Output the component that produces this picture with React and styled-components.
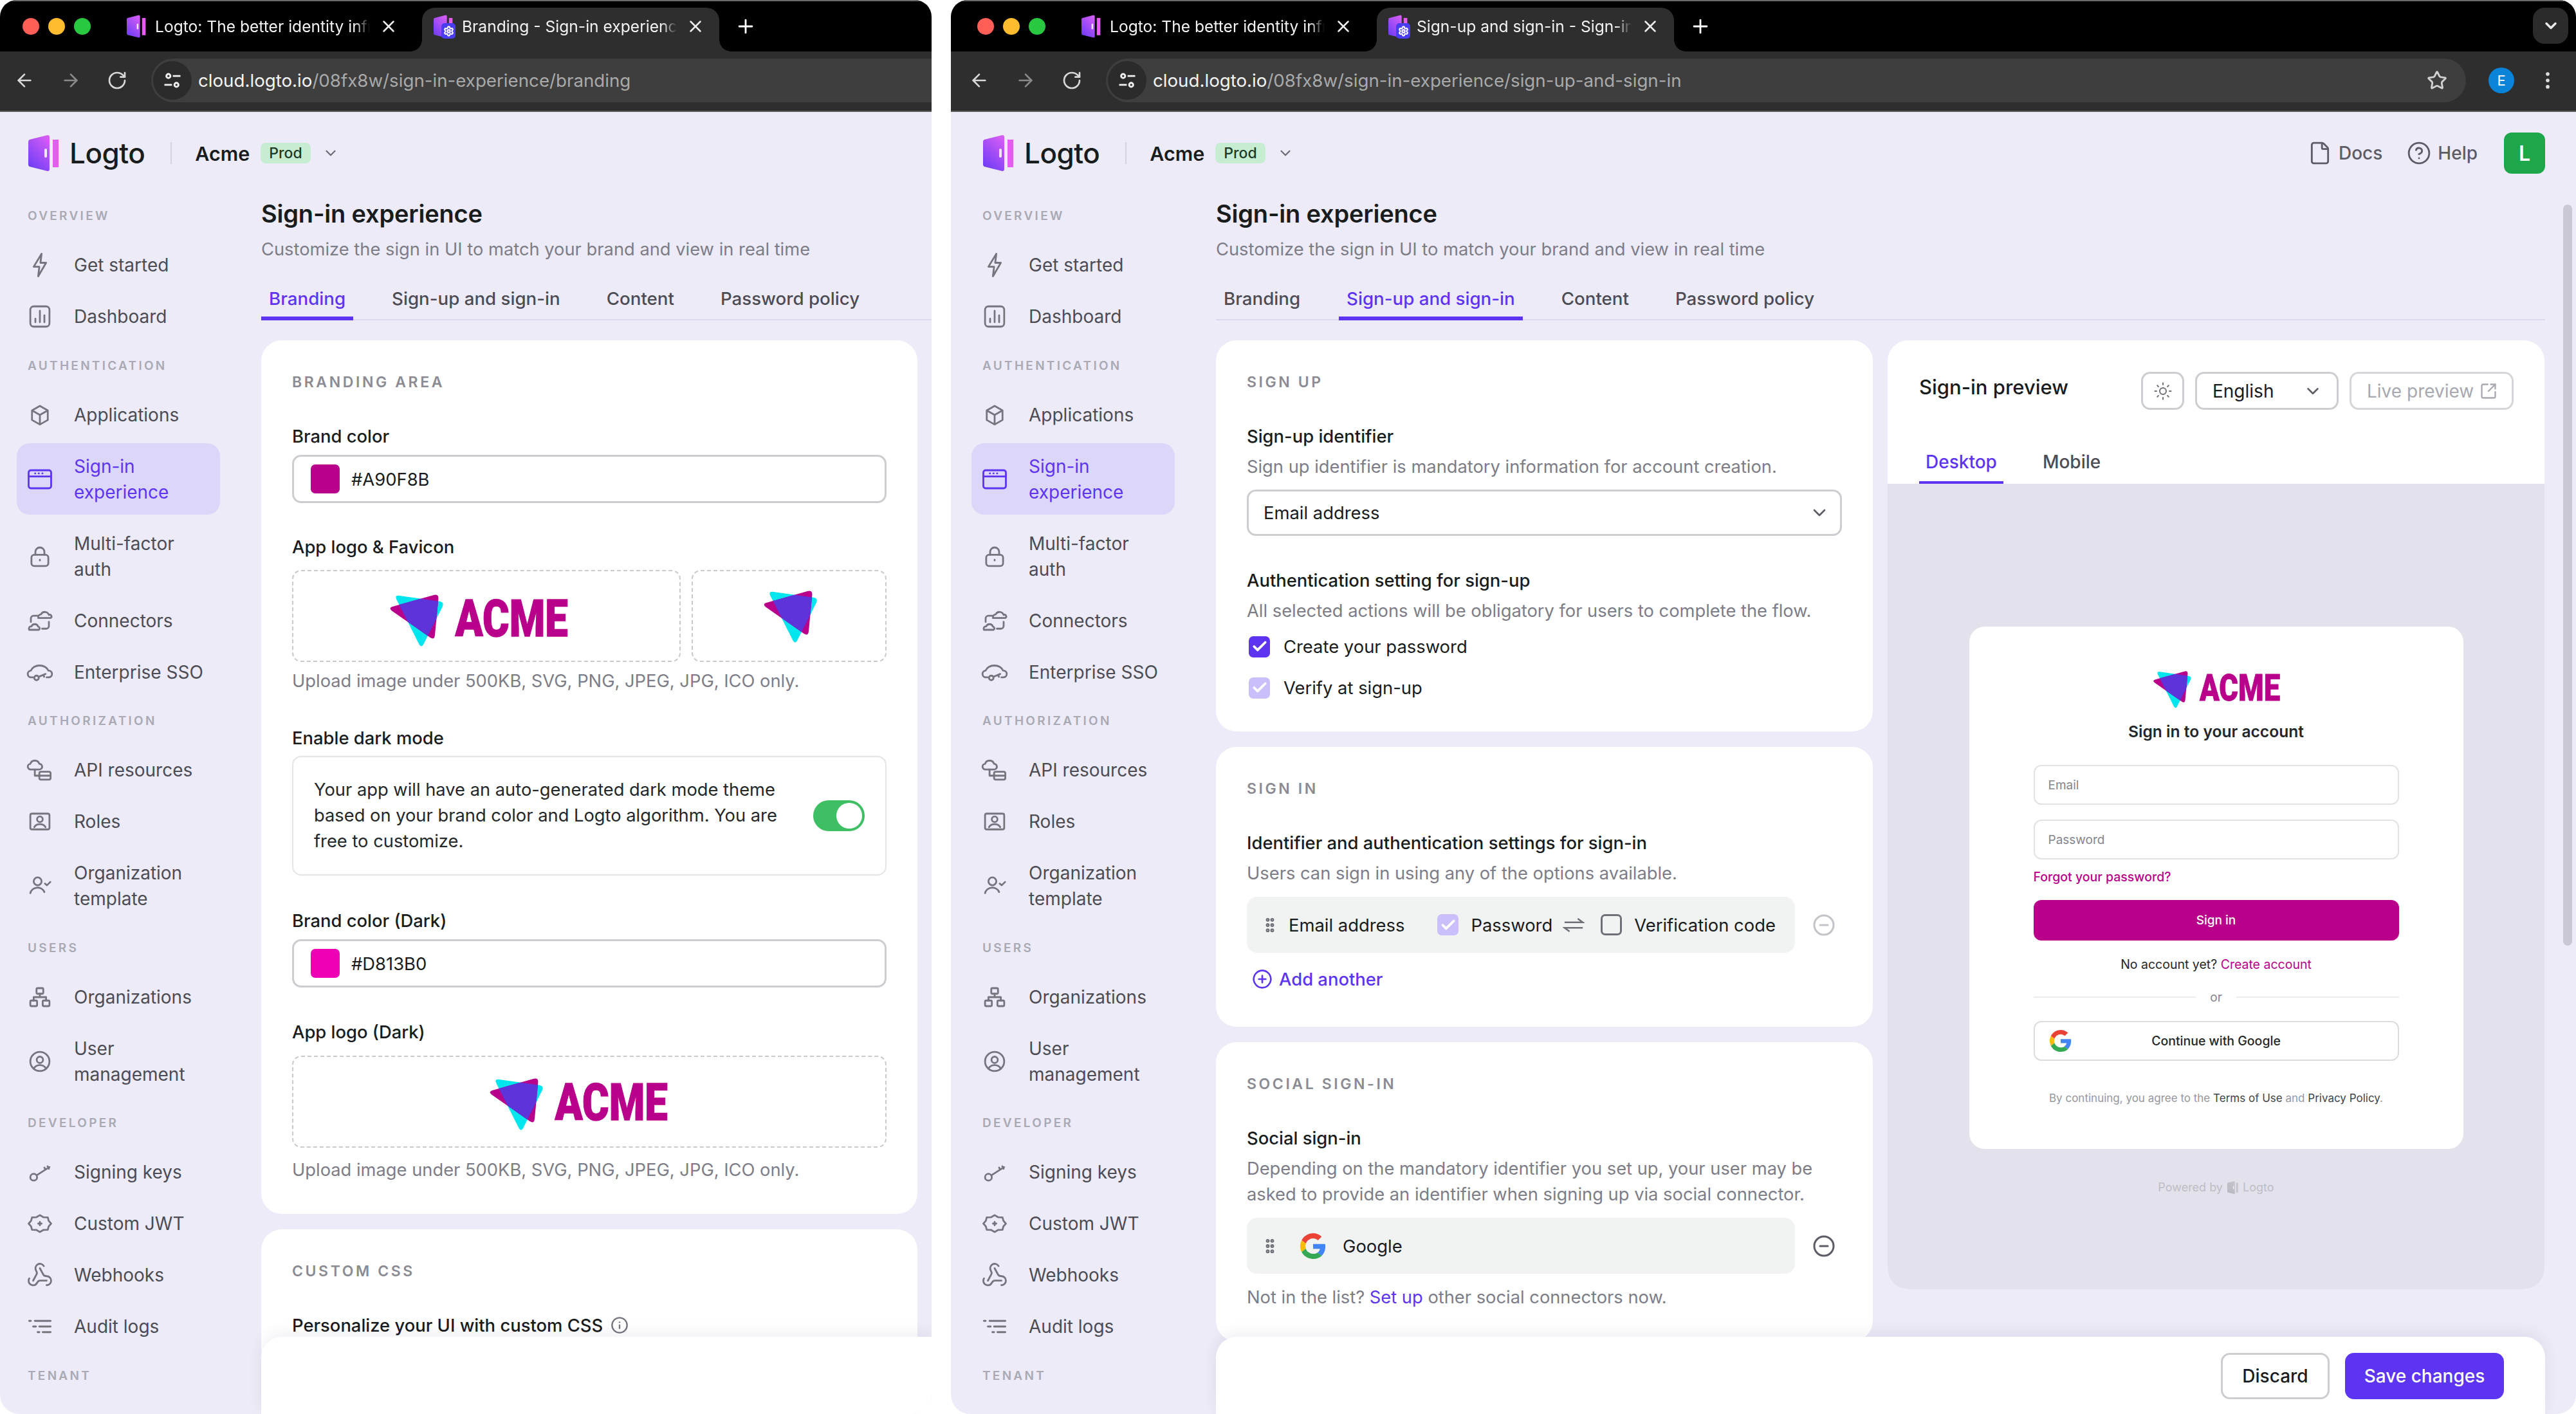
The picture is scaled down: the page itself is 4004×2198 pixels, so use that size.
import React from "react";
import styled, { createGlobalStyle } from "styled-components";
import {
  ArrowLeft,
  ArrowRight,
  Check,
  ChevronDown,
  CircleHelp,
  CircleMinus,
  CirclePlus,
  EllipsisVertical,
  File,
  GripVertical,
  Info,
  Plus,
  RotateCw,
  Settings,
  SquareArrowOutUpRight,
  Star,
  Sun,
  X,
} from "lucide-react";

const GlobalStyle = createGlobalStyle`
  html, body { margin: 0; padding: 0; background: #fff; }
  body { font-family: Inter, "Noto Sans", sans-serif; color: #191c1d; }
  * { box-sizing: border-box; }
`;

const PURPLE = "#5d34f2";
const BRAND = "#b8008b";

/* ---------- logos ---------- */

const roundedPath = (pts, r) => {
  const out = [];
  pts.forEach((p, i) => {
    const prev = pts[(i + pts.length - 1) % pts.length];
    const next = pts[(i + 1) % pts.length];
    const toward = (a, b) => {
      const len = Math.hypot(b[0] - a[0], b[1] - a[1]);
      return [a[0] + ((b[0] - a[0]) * r) / len, a[1] + ((b[1] - a[1]) * r) / len];
    };
    const s = toward(p, prev);
    const e = toward(p, next);
    out.push(`${i ? "L" : "M"}${s[0]} ${s[1]}Q${p[0]} ${p[1]} ${e[0]} ${e[1]}`);
  });
  return out.join("") + "Z";
};

const cyanTri = roundedPath([[5.5, 0.5], [61.5, 8.5], [35.5, 60]], 6);
const pinkTri = roundedPath([[-1.5, 15], [55, -1], [50, 51]], 6);

const TriangleMark = () => (
  <>
    <defs>
      <clipPath id="tri-clip">
        <path d={cyanTri} />
      </clipPath>
    </defs>
    <path d={cyanTri} fill="#00e6ee" />
    <path d={pinkTri} fill={BRAND} />
    <path d={pinkTri} fill="#5e33d9" clipPath="url(#tri-clip)" />
  </>
);

const LogoWord = styled.text`
  font-family: Roboto, sans-serif;
  font-weight: 900;
  fill: ${BRAND};
  stroke: ${BRAND};
  stroke-width: 0.9px;
`;

const AcmeLogo = ({ height }) => (
  <svg width={(height * 198) / 57} height={height} viewBox="0 0 198 57" overflow="visible">
    <TriangleMark />
    <LogoWord x="73" y="46" fontSize="57" textLength="125" lengthAdjust="spacingAndGlyphs">
      ACME
    </LogoWord>
  </svg>
);

const AcmeFavicon = ({ height }) => (
  <svg width={(height * 60) / 57} height={height} viewBox="0 0 60 57" overflow="visible">
    <TriangleMark />
  </svg>
);

const LogtoMark = ({ size = 56, muted }) => (
  <svg width={(size * 48) / 56} height={size} viewBox="0 0 48 56">
    <defs>
      <linearGradient id={muted ? "door-m" : "door"} x1="0.8" y1="0" x2="0.2" y2="1">
        <stop offset="0" stopColor={muted ? "#c4c4cc" : "#d65cf6"} />
        <stop offset="1" stopColor={muted ? "#b8b8c0" : "#6d3df5"} />
      </linearGradient>
    </defs>
    <path
      d="M0 10Q0 8 2 7L30 0Q33 0 33 3V53Q33 56 30 56L2 49Q0 48 0 46Z"
      fill={`url(#${muted ? "door-m" : "door"})`}
    />
    <path d="M38 7H47V50H38Z" fill={muted ? "#c4c4cc" : "#e45cf0"} />
    <rect x="25" y="21" width="4" height="14" rx="2" fill="#f5e8ff" />
  </svg>
);

const FaviconWrap = styled.span`
  position: relative;
  display: inline-flex;
  flex: none;
  width: 30px;
  height: 36px;
`;

const FaviconBadge = styled.span`
  position: absolute;
  right: -4px;
  bottom: -1px;
  width: 22px;
  height: 24px;
  border-radius: 5px;
  background: #4a3cf0;
  color: #fff;
  display: flex;
  align-items: center;
  justify-content: center;
`;

const TabFavicon = ({ badge }) => (
  <FaviconWrap>
    <LogtoMark size={36} />
    {badge && (
      <FaviconBadge>
        <Settings size={17} strokeWidth={3} />
      </FaviconBadge>
    )}
  </FaviconWrap>
);

const GoogleG = ({ size }) => (
  <svg width={size} height={size} viewBox="0 0 48 48">
    <path fill="#EA4335" d="M24 9.5c3.5 0 6.6 1.2 9.1 3.6l6.8-6.8C35.8 2.4 30.3 0 24 0 14.6 0 6.5 5.4 2.6 13.2l7.9 6.1C12.4 13.7 17.7 9.5 24 9.5z" />
    <path fill="#4285F4" d="M46.9 24.5c0-1.6-.2-3.100-.4-4.500H24v9h12.900c-.6 3-2.200 5.500-4.800 7.200l7.700 6c4.500-4.200 7.100-10.300 7.100-17.700z" />
    <path fill="#FBBC05" d="M10.500 28.700c-.5-1.500-.8-3-.8-4.700s.3-3.200.8-4.700l-7.900-6.100C.9 16.500 0 20.100 0 24s.9 7.500 2.600 10.800l7.900-6.100z" />
    <path fill="#34A853" d="M24 48c6.500 0 11.900-2.100 15.900-5.800l-7.700-6c-2.200 1.400-4.900 2.300-8.200 2.300-6.300 0-11.600-4.200-13.500-9.800l-7.900 6.100C6.500 42.600 14.600 48 24 48z" />
  </svg>
);

/* ---------- browser chrome ---------- */

const Page = styled.div`
  display: flex;
  gap: 30px;
  width: 4004px;
  height: 2198px;
  overflow: hidden;
`;

const Window = styled.div`
  position: relative;
  flex: none;
  width: ${(p) => p.$width}px;
  height: 2198px;
  border-radius: 26px 26px 30px 30px;
  overflow: hidden;
  background: #edebf7;
`;

const Frame = styled.div`
  position: relative;
  display: flex;
  flex-direction: column;
  width: ${(p) => p.$width}px;
  height: 100%;
  margin-left: ${(p) => p.$shift || 0}px;
`;

const TabStrip = styled.div`
  display: flex;
  align-items: flex-end;
  flex: none;
  height: 80px;
  padding-left: 41px;
  background: #000;
  border-top: 2px solid #6b6b6b;
  color: #fff;
`;

const Lights = styled.div`
  display: flex;
  gap: 14px;
  align-self: flex-start;
  margin: 26px 38px 0 0;
`;

const Light = styled.span`
  width: 26px;
  height: 26px;
  border-radius: 50%;
  background: ${(p) => p.$color};
`;

const BrowserTab = styled.div`
  position: relative;
  display: flex;
  align-items: center;
  gap: 14px;
  width: 462px;
  height: 68px;
  margin-right: ${(p) => (p.$active ? 0 : 15)}px;
  padding: 0 18px 10px;
  border-radius: 20px 20px 0 0;
  background: ${(p) => (p.$active ? "#2e2e2e" : "transparent")};

  ${(p) =>
    p.$active &&
    `
    &::before, &::after {
      content: "";
      position: absolute;
      bottom: 0;
      width: 18px;
      height: 18px;
    }
    &::before {
      left: -18px;
      background: radial-gradient(circle at 0 0, transparent 17.500px, #2e2e2e 18px);
    }
    &::after {
      right: -18px;
      background: radial-gradient(circle at 100% 0, transparent 17.500px, #2e2e2e 18px);
    }
  `}
`;

const TabTitle = styled.span`
  width: 334px;
  white-space: nowrap;
  font-size: 24.600px;
  line-height: 36px;
  color: #f2f2f2;
  mask-image: linear-gradient(90deg, #000 93%, transparent);
`;

const NewTab = styled.span`
  display: flex;
  align-self: center;
  margin-left: 24px;
  color: #fff;
`;

const TabSearch = styled.span`
  display: flex;
  align-items: center;
  justify-content: center;
  align-self: flex-start;
  width: 55px;
  height: 56px;
  margin: 10px 12px 0 auto;
  border-radius: 18px;
  background: #2b2b2b;
`;

const Toolbar = styled.div`
  display: flex;
  align-items: center;
  flex: none;
  height: 94px;
  padding: 0 0 2px 28px;
  background: #2e2e2e;
  border-bottom: 2px solid #5a5a5a;
`;

const NavArrows = styled.div`
  display: flex;
  gap: 40px;
  margin-right: 37px;
  color: #d8d8d8;

  svg:nth-child(2) {
    color: #8a8a8a;
  }
`;

const UrlPill = styled.div`
  display: flex;
  flex: 1;
  align-items: center;
  gap: 10px;
  height: 68px;
  padding: 0 29px 0 3px;
  border-radius: ${(p) => (p.$end ? "34px" : "34px 0 0 34px")};
  background: #3e3e3e;
`;

const SiteInfo = styled.span`
  display: flex;
  align-items: center;
  justify-content: center;
  width: 60px;
  height: 60px;
  border-radius: 50%;
  background: #2b2b2b;
  color: #f0f0f0;
`;

const UrlText = styled.span`
  flex: 1;
  font-size: 27.700px;
  color: #a9a9a9;
  white-space: nowrap;
`;

const UrlHost = styled.span`
  color: #f4f4f4;
`;

const ToolbarEnd = styled.div`
  display: flex;
  align-items: center;
  padding-left: 35px;
  padding-right: 27px;
  gap: 35px;
  color: #dedede;
`;

const ProfileDot = styled.span`
  display: flex;
  align-items: center;
  justify-content: center;
  width: 40px;
  height: 40px;
  border-radius: 50%;
  background: #0a84d9;
  color: #fff;
  font-size: 22px;
`;

const Browser = ({ activeTitle, host, path, end, extras }) => (
  <>
    <TabStrip>
      <Lights>
        <Light $color="#ff5f57" />
        <Light $color="#febc2e" />
        <Light $color="#28c840" />
      </Lights>
      <BrowserTab>
        <TabFavicon />
        <TabTitle>Logto: The better identity infr</TabTitle>
        <X size={30} color="#eee" />
      </BrowserTab>
      <BrowserTab $active>
        <TabFavicon badge />
        <TabTitle>{activeTitle}</TabTitle>
        <X size={30} color="#eee" />
      </BrowserTab>
      <NewTab>
        <Plus size={34} />
      </NewTab>
      {extras && (
        <TabSearch>
          <ChevronDown size={28} color="#e8e8e8" strokeWidth={3} />
        </TabSearch>
      )}
    </TabStrip>
    <Toolbar>
      <NavArrows>
        <ArrowLeft size={32} />
        <ArrowRight size={32} />
        <RotateCw size={32} />
      </NavArrows>
      <UrlPill $end={end}>
        <SiteInfo>
          <svg width="30" height="30" viewBox="0 0 24 24" fill="none" stroke="currentColor" strokeWidth="2.300">
            <circle cx="7" cy="6.500" r="2.500" />
            <path d="M12.500 6.500H22M2 17.500h9.500" />
            <circle cx="17" cy="17.500" r="2.500" />
          </svg>
        </SiteInfo>
        <UrlText>
          <UrlHost>{host}</UrlHost>
          {path}
        </UrlText>
        {end && <Star size={32} color="#d0d0d0" strokeWidth={2.200} />}
      </UrlPill>
      {extras && (
        <ToolbarEnd>
          <ProfileDot>E</ProfileDot>
          <EllipsisVertical size={34} />
        </ToolbarEnd>
      )}
    </Toolbar>
  </>
);

/* ---------- console top bar ---------- */

const TopBar = styled.div`
  display: flex;
  align-items: center;
  flex: none;
  height: 130px;
  padding: 0 48px 2px 50px;
`;

const Wordmark = styled.span`
  margin-left: 16px;
  font-size: 44px;
  font-weight: 500;
  letter-spacing: -0.5px;
`;

const BarDivider = styled.span`
  width: 2px;
  height: 34px;
  margin: 0 36px 0 40px;
  background: #d5d3de;
`;

const TenantName = styled.span`
  font-size: 30.500px;
  font-weight: 600;
`;

const ProdBadge = styled.span`
  margin: 0 18px 0 17px;
  padding: 0 13px;
  height: 32px;
  border-radius: 8px;
  background: #c6ecd2;
  font-size: 23px;
  line-height: 32px;
  font-weight: 500;
  color: #1e3a28;
`;

const BarLinks = styled.div`
  display: flex;
  align-items: center;
  margin-left: auto;
  font-size: 28px;
  font-weight: 500;
  color: #5c5c66;
`;

const BarLink = styled.span`
  display: flex;
  align-items: center;
  gap: 10px;
  margin-right: 41px;

  &:first-child {
    margin-right: 38px;
  }
`;

const Avatar = styled.span`
  display: flex;
  align-items: center;
  justify-content: center;
  width: 64px;
  height: 64px;
  border-radius: 12px;
  background: #1ea64a;
  color: #fff;
  font-size: 32px;
  font-weight: 600;
`;

const ConsoleBar = ({ links }) => (
  <TopBar>
    <LogtoMark />
    <Wordmark>Logto</Wordmark>
    <BarDivider />
    <TenantName>Acme</TenantName>
    <ProdBadge>Prod</ProdBadge>
    <ChevronDown size={26} color="#6a6a74" />
    {links && (
      <BarLinks>
        <BarLink>
          <File size={38} strokeWidth={1.800} />
          Docs
        </BarLink>
        <BarLink>
          <CircleHelp size={38} strokeWidth={1.800} />
          Help
        </BarLink>
        <Avatar>L</Avatar>
      </BarLinks>
    )}
  </TopBar>
);

/* ---------- sidebar ---------- */

const navIcons = {
  bolt: <path d="M13.500 2 6.500 13.500h5L10.500 22 17.500 10h-5z" />,
  dash: (
    <>
      <rect x="3.500" y="3" width="17" height="18" rx="3" />
      <path d="M8 17v-3M12 17V7M16 17v-6" />
    </>
  ),
  box: <path d="M12 4 5 8v8.500L12 20.500l7-4V8zM5 8l7 4 7-4M12 12v8.500" />,
  window: (
    <>
      <rect x="2" y="4" width="20" height="16" rx="2" />
      <path d="M2 9.500h20M7.800 6.800h.1M11 6.800h.1M14.200 6.800h.1" />
    </>
  ),
  lock: (
    <>
      <rect x="4.500" y="10.500" width="15" height="10" rx="2.500" />
      <path d="M8 10.500V8a4 4 0 0 1 8 0v2.500M12 15v.5" />
    </>
  ),
  connectors: (
    <path d="M10.500 9.500a2.800 2.800 0 0 1 2.500-3.300 3.800 3.800 0 0 1 7 .6 1.500 1.500 0 0 1 1.500 2.700zM2.500 20a2 2 0 0 1 2-3 3.200 3.200 0 0 1 6 .2 1.500 1.500 0 0 1 .5 2.800zM10 7.500H6.500a2.500 2.500 0 0 0-2.500 2.500v3M14 19h3.500a2.500 2.500 0 0 0 2.500-2.500v-3.500" />
  ),
  sso: (
    <>
      <path d="M6 16.500H4.500a3 3 0 0 1-.5-6 8 6 0 0 1 15.500 0 3 3 0 0 1 .5 6h-2" />
      <circle cx="9" cy="17" r="2" />
      <path d="M11 16l6-2.500M15 14.500l.8 1.500" />
    </>
  ),
  api: (
    <>
      <path d="M4 11.500a2.500 2.500 0 0 1-.5-5 4.200 4.200 0 0 1 8 0 2.500 2.500 0 0 1 1.500 4.500c-.4.500-1 .5-1.500.5z" />
      <path d="M7.500 11.500V17h4" />
      <rect x="11.500" y="13.500" width="10" height="7" rx="1.500" />
      <path d="M11.500 17h10" />
    </>
  ),
  roles: (
    <>
      <rect x="3.500" y="5" width="17" height="14" rx="1.500" />
      <circle cx="12" cy="10" r="2.500" />
      <path d="M7 17a5.500 4.500 0 0 1 10 0" />
    </>
  ),
  orgtmpl: (
    <>
      <circle cx="10" cy="8" r="3.500" />
      <path d="M3.500 18.500a6.500 6 0 0 1 12.500-1M16.500 10l1.800 1.500 3-3" />
    </>
  ),
  orgs: (
    <>
      <rect x="9" y="4" width="6" height="5" rx="1" />
      <rect x="3.500" y="15" width="6" height="5" rx="1" />
      <rect x="14.500" y="15" width="6" height="5" rx="1" />
      <path d="M6.500 15v-3h11v3M12 9v3" />
    </>
  ),
  user: (
    <>
      <circle cx="12" cy="12" r="8.500" />
      <circle cx="12" cy="10.500" r="2.800" />
      <path d="M6.500 18.500a6 5.500 0 0 1 11 0" />
    </>
  ),
  key: (
    <>
      <circle cx="6.500" cy="16.500" r="3" />
      <path d="M9.200 14.800 20.500 7.500M17 9.800 16 8M20 9 18.800 6.800" />
    </>
  ),
  jwt: (
    <path d="M12 4.500l3 1.800 4 .2.800 3L22 12l-2.200 2.500-.8 3-4 .2-3 1.800-3-1.800-4-.2-.8-3L2 12l2.200-2.500.8-3 4-.2zM12 10.500v3M10.500 12h3" />
  ),
  webhook: (
    <path d="M18 16.980h-5.990c-1.100 0-1.950.94-2.480 1.900A4 4 0 0 1 2 17c.01-.7.2-1.400.57-2M6 17l3.130-5.780c.53-.97.1-2.180-.5-3.100a4 4 0 1 1 6.890-4.060M12 6l3.130 5.730C15.660 12.700 16.900 13 18 13a4 4 0 0 1 0 8" />
  ),
  logs: <path d="M7.500 7h14M11.500 12h10M14.500 17h7M2.500 7h1.500M6 12h2.500M10 17h1.500" />,
};

const navSections = [
  {
    title: "OVERVIEW",
    items: [
      { icon: "bolt", label: "Get started" },
      { icon: "dash", label: "Dashboard" },
    ],
  },
  {
    title: "AUTHENTICATION",
    items: [
      { icon: "box", label: "Applications" },
      { icon: "window", label: "Sign-in experience", active: true },
      { icon: "lock", label: "Multi-factor auth" },
      { icon: "connectors", label: "Connectors" },
      { icon: "sso", label: "Enterprise SSO" },
    ],
  },
  {
    title: "AUTHORIZATION",
    items: [
      { icon: "api", label: "API resources" },
      { icon: "roles", label: "Roles" },
      { icon: "orgtmpl", label: "Organization template" },
    ],
  },
  {
    title: "USERS",
    items: [
      { icon: "orgs", label: "Organizations" },
      { icon: "user", label: "User management" },
    ],
  },
  {
    title: "DEVELOPER",
    items: [
      { icon: "key", label: "Signing keys" },
      { icon: "jwt", label: "Custom JWT" },
      { icon: "webhook", label: "Webhooks" },
      { icon: "logs", label: "Audit logs" },
    ],
  },
  { title: "TENANT", items: [] },
];

const Sidebar = styled.nav`
  display: flex;
  flex-direction: column;
  flex: none;
  gap: 9px;
  width: 412px;
  padding-left: 32px;
`;

const SectionTitle = styled.div`
  display: flex;
  align-items: center;
  flex: none;
  height: 63.500px;
  padding-left: 17px;
  font-size: 19px;
  font-weight: 600;
  letter-spacing: 3.300px;
  color: #a9a9b3;
`;

const NavItem = styled.div`
  display: flex;
  align-items: center;
  flex: none;
  gap: 32px;
  width: 316px;
  padding: 15.500px 15px;
  border-radius: 20px;
  font-size: 28px;
  line-height: 40px;
  background: ${(p) => (p.$active ? "#dcd6f9" : "transparent")};
  color: ${(p) => (p.$active ? PURPLE : "#4c4c55")};
`;

const NavLabel = styled.span`
  width: 205px;
`;

const NavGlyph = styled.svg`
  flex: none;
  width: 42px;
  height: 42px;
  margin: -1px 0;
  fill: none;
  stroke: ${(p) => (p.$active ? PURPLE : "#75757e")};
  stroke-width: 1.600;
  stroke-linecap: round;
  stroke-linejoin: round;
`;

const SideNav = () => (
  <Sidebar>
    {navSections.map((section) => (
      <React.Fragment key={section.title}>
        <SectionTitle>{section.title}</SectionTitle>
        {section.items.map((item) => (
          <NavItem key={item.label} $active={item.active}>
            <NavGlyph viewBox="0 0 24 24" $active={item.active}>
              {navIcons[item.icon]}
            </NavGlyph>
            <NavLabel>{item.label}</NavLabel>
          </NavItem>
        ))}
      </React.Fragment>
    ))}
  </Sidebar>
);

/* ---------- main column ---------- */

const Content = styled.div`
  display: flex;
  flex: 1;
  min-height: 0;
  overflow: hidden;
`;

const Main = styled.main`
  flex: 1;
  min-width: 0;
  padding-right: ${(p) => p.$right || 0}px;
`;

const PageTitle = styled.h1`
  margin: 0;
  font-size: 38px;
  line-height: 56px;
  font-weight: 600;
  letter-spacing: -0.2px;
`;

const PageSub = styled.p`
  margin: 8px 0 0;
  font-size: 27.300px;
  line-height: 40px;
  color: #7d7d87;
`;

const PageTabs = styled.div`
  display: flex;
  gap: 48px;
  height: 66px;
  margin: 24px 0 31px;
  border-bottom: 2px solid #dcd8ee;
`;

const PageTab = styled.span`
  height: 66px;
  padding: 12px 12px 0;
  font-size: 27.700px;
  line-height: 40px;
  font-weight: 500;
  color: ${(p) => (p.$active ? PURPLE : "#4c4c55")};
  border-bottom: ${(p) => (p.$active ? `6px solid ${PURPLE}` : "none")};
`;

const Card = styled.section`
  width: ${(p) => p.$width || 1021}px;
  padding: 49px 48px 48px;
  border-radius: 32px;
  background: #fff;
  margin-bottom: 24px;
`;

const Heading = styled.h2`
  margin: 0 0 48px;
  font-size: 23px;
  line-height: 32px;
  font-weight: 600;
  letter-spacing: 3.600px;
  color: #8b8b94;
`;

const Label = styled.div`
  margin-top: ${(p) => p.$top ?? 48}px;
  font-size: 27.400px;
  line-height: 40px;
  font-weight: 500;
  display: flex;
  align-items: center;
  gap: 12px;
`;

const Sub = styled.p`
  margin: ${(p) => p.$top ?? 8}px 0 0;
  font-size: 27.300px;
  line-height: 40px;
  color: #7d7d87;
`;

const LinkText = styled.span`
  color: ${PURPLE};
`;

const ColorInput = styled.div`
  display: flex;
  align-items: center;
  gap: 18px;
  height: 75px;
  margin-top: 9px;
  padding-left: 26px;
  border: 3px solid #cdcdd1;
  border-radius: 14px;
  font-size: 27.400px;
`;

const Swatch = styled.span`
  width: 45px;
  height: 45px;
  border-radius: 7px;
  background: ${(p) => p.$color};
`;

const UploadRow = styled.div`
  display: flex;
  gap: 17px;
  margin-top: ${(p) => p.$top ?? 16}px;
`;

const Upload = styled.div`
  display: flex;
  align-items: center;
  justify-content: center;
  flex: none;
  width: ${(p) => p.$width || 924}px;
  height: 143px;
  padding: ${(p) => p.$pad || 0};
  border: 2px dashed #cacace;
  border-radius: 14px;
`;

const ToggleBox = styled.div`
  display: flex;
  align-items: center;
  justify-content: space-between;
  height: 186px;
  margin-top: 8px;
  padding: 0 32px;
  border: 2px solid #e4e4e8;
  border-radius: 14px;
  font-size: 27.300px;
  line-height: 40px;
`;

const ToggleCopy = styled.p`
  margin: 0;
  width: 750px;
  color: #24272a;
`;

const Toggle = styled.span`
  display: flex;
  justify-content: flex-end;
  align-items: center;
  width: 80px;
  height: 48px;
  padding: 4px;
  border-radius: 24px;
  background: #3fbf63;
`;

const ToggleKnob = styled.span`
  width: 40px;
  height: 40px;
  border-radius: 50%;
  background: #fff;
`;

const SelectBox = styled.div`
  display: flex;
  align-items: center;
  justify-content: space-between;
  height: 72px;
  margin-top: 15px;
  padding: 0 16px 0 23px;
  border: 3px solid #cdcdd1;
  border-radius: 14px;
  font-size: 27.400px;
`;

const CheckRow = styled.div`
  display: flex;
  align-items: center;
  gap: 21px;
  height: 40px;
  margin-top: ${(p) => p.$top}px;
  padding-left: 3px;
  font-size: 27.400px;
`;

const CheckBox = styled.span`
  display: flex;
  align-items: center;
  justify-content: center;
  flex: none;
  width: 33px;
  height: 33px;
  border-radius: 7px;
  color: #fff;
  background: ${(p) => p.$bg || "transparent"};
  border: ${(p) => (p.$bg ? "none" : "3px solid #6f6f78")};
  margin-left: ${(p) => p.$left || 0}px;
`;

const ListLine = styled.div`
  display: flex;
  align-items: center;
  margin-top: 16px;
`;

const ListRow = styled.div`
  display: flex;
  align-items: center;
  width: 852px;
  height: 87px;
  padding-left: 22px;
  border-radius: 16px;
  background: #f1f2f2;
  font-size: 27.400px;
  margin-right: 27px;
  color: #191c1d;
`;

const RowText = styled.span`
  display: flex;
  margin-left: ${(p) => p.$left}px;
`;

const SwapGlyph = styled.svg`
  width: 34px;
  height: 34px;
  margin-left: 16px;
  fill: none;
  stroke: #6f6f78;
  stroke-width: 1.800;
`;

const AddLink = styled.div`
  display: flex;
  align-items: center;
  gap: 10px;
  margin: 21px 0 6px 8px;
  font-size: 27.400px;
  line-height: 40px;
  font-weight: 500;
  color: ${PURPLE};
`;

const HelpIcon = styled(Info)`
  color: #75757e;
`;

const Columns = styled.div`
  display: flex;
  gap: 23px;
`;

/* ---------- preview ---------- */

const PreviewPanel = styled.section`
  display: flex;
  flex-direction: column;
  width: 1021px;
  height: 1475px;
  border-radius: 32px;
  background: #fff;
  overflow: hidden;
`;

const PreviewHead = styled.div`
  display: flex;
  align-items: flex-start;
  gap: 17px;
  padding: 49px 48px 0 49px;
`;

const PreviewTitle = styled.h3`
  flex: 1;
  margin: 0;
  font-size: 31px;
  line-height: 48px;
  font-weight: 500;
`;

const ControlBox = styled.span`
  display: flex;
  align-items: center;
  justify-content: ${(p) => (p.$spread ? "space-between" : "center")};
  width: ${(p) => p.$width}px;
  height: 59px;
  padding: ${(p) => (p.$spread ? "0 22px 0 24px" : 0)};
  border: 3px solid ${(p) => (p.$soft ? "#d6d6da" : "#cdcdd1")};
  border-radius: 14px;
  font-size: 28px;
  color: ${(p) => (p.$soft ? "#a8a8b0" : "#191c1d")};
`;

const PreviewTabs = styled.div`
  display: flex;
  gap: 51px;
  margin-top: 61px;
  padding-left: 49px;
`;

const PreviewTab = styled.span`
  height: 54px;
  padding: 0 10px;
  font-size: 28px;
  line-height: 40px;
  font-weight: 500;
  color: ${(p) => (p.$active ? PURPLE : "#4c4c55")};
  border-bottom: ${(p) => (p.$active ? `4px solid ${PURPLE}` : "none")};
`;

const PreviewStage = styled.div`
  display: flex;
  flex: 1;
  flex-direction: column;
  align-items: center;
  padding-top: 222px;
  background: #e3e1eb;
`;

const SignCard = styled.div`
  display: flex;
  flex-direction: column;
  width: 768px;
  height: 812px;
  padding: 69px 100px 0;
  border-radius: 24px;
  background: #fff;
`;

const SignLogo = styled.div`
  display: flex;
  justify-content: center;
`;

const SignTitle = styled.div`
  margin-top: 21px;
  text-align: center;
  font-size: 24.600px;
  line-height: 32px;
  font-weight: 600;
  color: #24272a;
`;

const SignInput = styled.div`
  display: flex;
  align-items: center;
  height: 62px;
  margin-top: ${(p) => p.$top}px;
  padding-left: 21px;
  border: 2px solid #e2e2e5;
  border-radius: 12px;
  font-size: 19px;
  color: #85858d;
`;

const SignLink = styled.div`
  margin-top: 14px;
  font-size: 19.500px;
  line-height: 26px;
  font-weight: 500;
  color: ${BRAND};
`;

const SignButton = styled.div`
  display: flex;
  align-items: center;
  justify-content: center;
  height: 63px;
  margin-top: 23px;
  border-radius: 12px;
  background: ${BRAND};
  color: #fff;
  font-size: 19px;
  font-weight: 500;
`;

const SignNote = styled.div`
  margin-top: 24px;
  text-align: center;
  font-size: 19.500px;
  line-height: 26px;
  color: #24272a;
`;

const BrandText = styled.span`
  color: ${BRAND};
`;

const OrLine = styled.div`
  display: flex;
  align-items: center;
  gap: 22px;
  height: 26px;
  margin-top: 25px;
  font-size: 19px;
  color: #85858d;

  &::before, &::after {
    content: "";
    flex: 1;
    height: 2px;
    background: #ececee;
  }
`;

const GoogleButton = styled.div`
  position: relative;
  display: flex;
  align-items: center;
  justify-content: center;
  height: 62px;
  margin-top: 24px;
  border: 2px solid #dcdce0;
  border-radius: 12px;
  font-size: 19.500px;
  font-weight: 500;
  color: #24272a;

  svg {
    position: absolute;
    left: 23px;
  }
`;

const Terms = styled.div`
  margin-top: 45px;
  text-align: center;
  font-size: 17px;
  line-height: 26px;
  color: #96969e;
  white-space: nowrap;
`;

const TermsLink = styled.span`
  color: #42424a;
`;

const Powered = styled.div`
  display: flex;
  align-items: center;
  gap: 7px;
  margin-top: 47px;
  font-size: 18px;
  line-height: 26px;
  color: #bdbdc5;
`;

const SavedBar = styled.div`
  position: absolute;
  left: 412px;
  right: ${(p) => p.$right || 0}px;
  bottom: 0;
  display: flex;
  justify-content: flex-end;
  gap: 24px;
  height: 120px;
  padding: 25px 64px 0 0;
  border-radius: ${(p) => (p.$right ? "32px 32px 0 0" : "32px 0 0 0")};
  background: #fff;
  box-shadow: 0 -6px 24px rgba(40, 30, 90, 0.07);
`;

const BarButton = styled.span`
  display: flex;
  align-items: center;
  justify-content: center;
  width: ${(p) => p.$width}px;
  height: 72px;
  border-radius: 14px;
  font-size: 28px;
  font-weight: 500;
  background: ${(p) => (p.$primary ? PURPLE : "#fff")};
  color: ${(p) => (p.$primary ? "#fff" : "#191c1d")};
  border: ${(p) => (p.$primary ? "none" : "3px solid #cdcdd1")};
`;

const ScrollThumb = styled.div`
  position: absolute;
  top: 318px;
  right: 6px;
  width: 14px;
  height: 1152px;
  border-radius: 7px;
  background: #c9c8d3;
`;

/* ---------- pages ---------- */

const PageHeader = ({ active }) => (
  <>
    <PageTitle>Sign-in experience</PageTitle>
    <PageSub>Customize the sign in UI to match your brand and view in real time</PageSub>
    <PageTabs>
      {["Branding", "Sign-up and sign-in", "Content", "Password policy"].map((tab) => (
        <PageTab key={tab} $active={tab === active}>
          {tab}
        </PageTab>
      ))}
    </PageTabs>
  </>
);

const BrandingPage = () => (
  <Main>
    <PageHeader active="Branding" />
    <Card $width={1020}>
      <Heading>BRANDING AREA</Heading>
      <Label $top={0}>Brand color</Label>
      <ColorInput>
        <Swatch $color="#b8008b" />
        #A90F8B
      </ColorInput>
      <Label>App logo &amp; Favicon</Label>
      <UploadRow>
        <Upload $width={604} $pad="12px 24px 0 0">
          <AcmeLogo height={80} />
        </Upload>
        <Upload $width={303} $pad="0 0 0 4px">
          <AcmeFavicon height={80} />
        </Upload>
      </UploadRow>
      <Sub $top={10}>Upload image under 500KB, SVG, PNG, JPEG, JPG, ICO only.</Sub>
      <Label>Enable dark mode</Label>
      <ToggleBox>
        <ToggleCopy>
          Your app will have an auto-generated dark mode theme based on your brand color and Logto algorithm. You are
          free to customize.
        </ToggleCopy>
        <Toggle>
          <ToggleKnob />
        </Toggle>
      </ToggleBox>
      <Label $top={50}>Brand color (Dark)</Label>
      <ColorInput>
        <Swatch $color="#ee00b4" />
        #D813B0
      </ColorInput>
      <Label $top={49}>App logo (Dark)</Label>
      <UploadRow $top={17}>
        <Upload $pad="6px 34px 0 0">
          <AcmeLogo height={80} />
        </Upload>
      </UploadRow>
      <Sub $top={15}>Upload image under 500KB, SVG, PNG, JPEG, JPG, ICO only.</Sub>
    </Card>
    <Card $width={1020}>
      <Heading>CUSTOM CSS</Heading>
      <Label $top={0}>
        Personalize your UI with custom CSS
        <HelpIcon size={28} />
      </Label>
    </Card>
  </Main>
);

const SignUpPage = () => (
  <Main $right={48}>
    <PageHeader active="Sign-up and sign-in" />
    <Columns>
      <div>
        <Card>
          <Heading>SIGN UP</Heading>
          <Label $top={0}>Sign-up identifier</Label>
          <Sub>Sign up identifier is mandatory information for account creation.</Sub>
          <SelectBox>
            Email address
            <ChevronDown size={32} color="#5c5c66" />
          </SelectBox>
          <Label $top={49}>Authentication setting for sign-up</Label>
          <Sub>All selected actions will be obligatory for users to complete the flow.</Sub>
          <CheckRow $top={15}>
            <CheckBox $bg={PURPLE}>
              <Check size={26} strokeWidth={3.500} />
            </CheckBox>
            Create your password
          </CheckRow>
          <CheckRow $top={24}>
            <CheckBox $bg="#cbbffb">
              <Check size={26} strokeWidth={3.500} />
            </CheckBox>
            Verify at sign-up
          </CheckRow>
        </Card>
        <Card>
          <Heading>SIGN IN</Heading>
          <Label $top={0}>Identifier and authentication settings for sign-in</Label>
          <Sub>Users can sign in using any of the options available.</Sub>
          <ListLine>
            <ListRow>
              <GripVertical size={28} color="#6f6f78" strokeWidth={3} />
              <RowText $left={15}>Email address</RowText>
              <CheckBox $bg="#cbbffb" $left={51}>
                <Check size={26} strokeWidth={3.500} />
              </CheckBox>
              <RowText $left={19}>Password</RowText>
              <SwapGlyph viewBox="0 0 24 24">
                <path d="M2 9h20l-5.500-4M22 15H2l5.500 4" />
              </SwapGlyph>
              <CheckBox $left={25} />
              <RowText $left={19}>Verification code</RowText>
            </ListRow>
            <CircleMinus size={36} color="#c3c4c8" />
          </ListLine>
          <AddLink>
            <CirclePlus size={32} />
            Add another
          </AddLink>
        </Card>
        <Card>
          <Heading>SOCIAL SIGN-IN</Heading>
          <Label $top={0}>Social sign-in</Label>
          <Sub>
            Depending on the mandatory identifier you set up, your user may be asked to provide an identifier when
            signing up via social connector.
          </Sub>
          <ListLine>
            <ListRow>
              <GripVertical size={28} color="#6f6f78" strokeWidth={3} />
              <RowText $left={33}>
                <GoogleG size={40} />
              </RowText>
              <RowText $left={26}>Google</RowText>
            </ListRow>
            <CircleMinus size={36} color="#5c5c66" />
          </ListLine>
          <Sub $top={17}>
            Not in the list? <LinkText>Set up</LinkText> other social connectors now.
          </Sub>
        </Card>
      </div>
      <PreviewPanel>
        <PreviewHead>
          <PreviewTitle>Sign-in preview</PreviewTitle>
          <ControlBox $width={67}>
            <Sun size={30} color="#6f6f78" strokeWidth={1.600} />
          </ControlBox>
          <ControlBox $width={223} $spread>
            English
            <ChevronDown size={30} color="#5c5c66" />
          </ControlBox>
          <ControlBox $width={255} $spread $soft>
            Live preview
            <SquareArrowOutUpRight size={28} />
          </ControlBox>
        </PreviewHead>
        <PreviewTabs>
          <PreviewTab $active>Desktop</PreviewTab>
          <PreviewTab>Mobile</PreviewTab>
        </PreviewTabs>
        <PreviewStage>
          <SignCard>
            <SignLogo>
              <AcmeLogo height={57} />
            </SignLogo>
            <SignTitle>Sign in to your account</SignTitle>
            <SignInput $top={36}>Email</SignInput>
            <SignInput $top={23}>Password</SignInput>
            <SignLink>Forgot your password?</SignLink>
            <SignButton>Sign in</SignButton>
            <SignNote>
              No account yet? <BrandText>Create account</BrandText>
            </SignNote>
            <OrLine>or</OrLine>
            <GoogleButton>
              <GoogleG size={34} />
              Continue with Google
            </GoogleButton>
            <Terms>
              By continuing, you agree to the <TermsLink>Terms of Use</TermsLink> and{" "}
              <TermsLink>Privacy Policy</TermsLink>.
            </Terms>
          </SignCard>
          <Powered>
            Powered by
            <LogtoMark size={20} muted />
            Logto
          </Powered>
        </PreviewStage>
      </PreviewPanel>
    </Columns>
  </Main>
);

export default function App() {
  return (
    <>
      <GlobalStyle />
      <Page>
        <Window $width={1448}>
          <Frame $width={1454} $shift={-6}>
            <Browser activeTitle="Branding - Sign-in experience" host="cloud.logto.io" path="/08fx8w/sign-in-experience/branding" />
            <ConsoleBar />
            <Content>
              <SideNav />
              <BrandingPage />
            </Content>
            <SavedBar />
          </Frame>
        </Window>
        <Window $width={2526}>
          <Frame $width={2526}>
            <Browser
              activeTitle="Sign-up and sign-in - Sign-in"
              host="cloud.logto.io"
              path="/08fx8w/sign-in-experience/sign-up-and-sign-in"
              end
              extras
            />
            <ConsoleBar links />
            <Content>
              <SideNav />
              <SignUpPage />
            </Content>
            <SavedBar $right={48}>
              <BarButton $width={169}>Discard</BarButton>
              <BarButton $width={247} $primary>
                Save changes
              </BarButton>
            </SavedBar>
            <ScrollThumb />
          </Frame>
        </Window>
      </Page>
    </>
  );
}
